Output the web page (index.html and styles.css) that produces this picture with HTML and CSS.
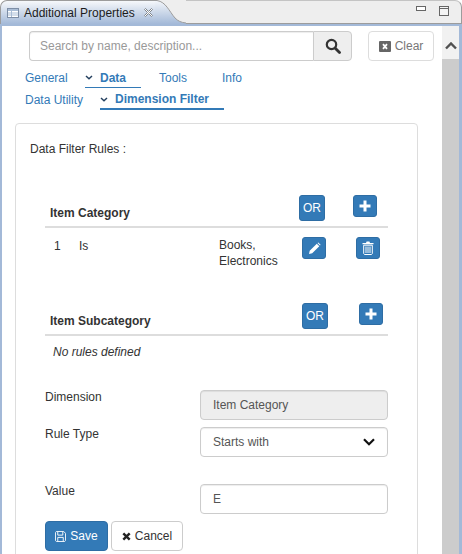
FILE: index.html
```html
<!DOCTYPE html>
<html lang="en">
<head>
<meta charset="UTF-8">
<meta name="viewport" content="width=device-width, initial-scale=1.0">
<title>Additional Properties</title>
<link rel="stylesheet" href="styles.css">
</head>
<body>

<div class="window">
  <div class="tabbar">
    <div class="tab">
      <svg class="tab-icon" width="12" height="10" viewBox="0 0 12 10">
        <rect x="0.500" y="0.500" width="11" height="9" fill="#fff" stroke="#7d8ea6"/>
        <rect x="1" y="1" width="10" height="2" fill="#a9bdd6"/>
        <path d="M1 5h10M1 7h10M4.500 3v6" stroke="#a9bdd6" fill="none"/>
      </svg>
      <span class="tab-title">Additional Properties</span>
      <svg class="tab-close" width="11" height="11" viewBox="0 0 11 11">
        <path d="M1.500 2.500l1-1 3 3 3-3 1 1-3 3 3 3-1 1-3-3-3 3-1-1 3-3z" fill="#fff" stroke="#7f858c"/>
      </svg>
    </div>
    <svg class="tab-curve" width="31" height="24" viewBox="0 0 31 24">
      <defs>
        <linearGradient id="tabFill" x1="0" y1="0" x2="0" y2="1">
          <stop offset="0" stop-color="#f6f8fb"/>
          <stop offset="1" stop-color="#a3b9d8"/>
        </linearGradient>
      </defs>
      <path d="M0 0H2C11 2 14 11 20 18C23 21 26 22.500 31 23V24H0z" fill="url(#tabFill)"/>
      <path d="M0 0.500H2C11 2 14 11 20 18C23 21 26 22.500 31 23" fill="none" stroke="#9c9c9c"/>
    </svg>
    <div class="tab-rest">
      <svg width="10" height="5" viewBox="0 0 10 5"><rect x="0.500" y="0.500" width="9" height="4" fill="#fff" stroke="#666"/></svg>
      <svg width="10" height="10" viewBox="0 0 10 10"><rect x="0.500" y="0.500" width="9" height="9" fill="#f4f4f4" stroke="#666"/><path d="M0 2.500h10" stroke="#666"/></svg>
    </div>
  </div>

  <div class="view">
    <div class="content">
      <div class="search-row">
        <div class="search">
          <input class="search-input" type="text" placeholder="Search by name, description...">
          <button class="search-btn">
            <svg width="16" height="16" viewBox="0 0 16 16">
              <circle cx="6.500" cy="6.500" r="4.700" fill="none" stroke="#333" stroke-width="2.200"/>
              <path d="M10 10l4.500 4.500" stroke="#333" stroke-width="2.800" stroke-linecap="round"/>
            </svg>
          </button>
        </div>
        <button class="clear-btn">
          <svg width="12" height="11" viewBox="0 0 12 11">
            <rect width="12" height="11" rx="1" fill="#666"/>
            <path d="M4 3.200l4 4.600M8 3.200l-4 4.600" stroke="#fff" stroke-width="1.800"/>
          </svg>
          Clear
        </button>
      </div>

      <div class="nav nav-top">
        <a class="nav-link nav-general">General</a>
        <a class="nav-link nav-open nav-data">
          <svg class="chev" width="8" height="5" viewBox="0 0 8 5"><path d="M1 1l3 2.700L7 1" fill="none" stroke="#24405f" stroke-width="1.500"/></svg>
          Data
        </a>
        <a class="nav-link nav-tools">Tools</a>
        <a class="nav-link">Info</a>
      </div>
      <div class="nav nav-sub">
        <a class="nav-link nav-utility">Data Utility</a>
        <a class="nav-link nav-open nav-filter">
          <svg class="chev" width="8" height="5" viewBox="0 0 8 5"><path d="M1 1l3 2.700L7 1" fill="none" stroke="#24405f" stroke-width="1.500"/></svg>
          Dimension Filter
        </a>
      </div>

      <div class="card">
        <div class="card-title">Data Filter Rules :</div>

        <div class="rules rules-category">
          <div class="rules-head">
            <span class="rules-name">Item Category</span>
            <button class="btn-blue btn-or">OR</button>
            <button class="btn-blue btn-icon btn-add">
              <svg width="12" height="12" viewBox="0 0 12 12"><path d="M4.500 0.500h3v4h4v3h-4v4h-3v-4h-4v-3h4z" fill="#fff"/></svg>
            </button>
          </div>
          <div class="rule-row">
            <span class="rule-num">1</span>
            <span class="rule-op">Is</span>
            <span class="rule-val">Books,<br>Electronics</span>
            <button class="btn-blue btn-icon btn-edit">
              <svg width="13" height="13" viewBox="0 0 13 13"><path d="M1 12l.7-3.200L8.800 1.700l2.500 2.500-7.100 7.100zM9.500 1l.8-.6 2.300 2.300-.6.800z" fill="#fff"/></svg>
            </button>
            <button class="btn-blue btn-icon btn-del">
              <svg width="12" height="14" viewBox="0 0 12 14">
                <path d="M4 2l.6-1.500h2.800L8 2h3.500v1.200H.5V2z" fill="#fff"/>
                <path d="M1.700 4.200h8.600v8.300l-.8 1h-7l-.8-1z" fill="none" stroke="#fff"/>
                <path d="M4 5.500v6.500M6 5.500v6.500M8 5.500v6.500" stroke="#fff"/>
              </svg>
            </button>
          </div>
        </div>

        <div class="rules rules-subcategory">
          <div class="rules-head">
            <span class="rules-name">Item Subcategory</span>
            <button class="btn-blue btn-or">OR</button>
            <button class="btn-blue btn-icon btn-add">
              <svg width="12" height="12" viewBox="0 0 12 12"><path d="M4.500 0.500h3v4h4v3h-4v4h-3v-4h-4v-3h4z" fill="#fff"/></svg>
            </button>
          </div>
          <div class="rules-empty">No rules defined</div>
        </div>

        <form class="rule-form">
          <label class="form-label" for="dimension">Dimension</label>
          <input class="form-control" id="dimension" type="text" value="Item Category" disabled>

          <label class="form-label" for="ruleType">Rule Type</label>
          <div class="form-control select-box" id="ruleType">
            <span>Starts with</span>
            <svg width="12" height="8" viewBox="0 0 12 8"><path d="M1 1.200l5 5 5-5" fill="none" stroke="#111" stroke-width="2.200"/></svg>
          </div>

          <label class="form-label label-value" for="value">Value</label>
          <input class="form-control control-value" id="value" type="text" value="E">
        </form>

        <div class="actions">
          <button class="save-btn">
            <svg width="11" height="11" viewBox="0 0 12 12">
              <path d="M.5 1.500l1-1h8l2 2v8l-1 1h-9l-1-1z" fill="none" stroke="#fff"/>
              <path d="M3 1v3.500h5.500V1M3 11V7h6v4" fill="none" stroke="#fff"/>
            </svg>
            Save
          </button>
          <button class="cancel-btn">
            <svg width="9" height="9" viewBox="0 0 9 9"><path d="M1.300 1.300l6.400 6.400M7.700 1.300L1.300 7.700" stroke="#222" stroke-width="2.400"/></svg>
            Cancel
          </button>
        </div>
      </div>
    </div>

    <div class="scrollbar">
      <div class="scroll-up">
        <svg width="12" height="8" viewBox="0 0 12 8"><path d="M1 6.500l5-5 5 5" fill="none" stroke="#505050" stroke-width="2.400"/></svg>
      </div>
    </div>
  </div>
</div>

</body>
</html>
```

FILE: styles.css
```css
* {
  box-sizing: border-box;
}

html, body {
  margin: 0;
  padding: 0;
  height: 100%;
  overflow: hidden;
}

body {
  font-family: "Liberation Sans", Arial, sans-serif;
  font-size: 12px;
  color: #333;
  background-color: #fff;
}

button, input {
  font-family: inherit;
  font-size: 12px;
}

.window {
  width: 462px;
  height: 554px;
  display: flex;
  flex-direction: column;
}

/* eclipse style view tab */
.tabbar {
  height: 24px;
  display: flex;
  flex-shrink: 0;
}

.tab {
  width: 155px;
  height: 24px;
  display: flex;
  align-items: center;
  padding-left: 6px;
  border-top: 1px solid #9c9c9c;
  border-left: 1px solid #9c9c9c;
  border-top-left-radius: 7px;
  background: linear-gradient(#f6f8fb, #a3b9d8);
}

.tab-icon {
  flex-shrink: 0;
}

.tab-title {
  margin-left: 5px;
  color: #1c1c1c;
  white-space: nowrap;
}

.tab-close {
  margin-left: 8px;
  flex-shrink: 0;
}

.tab-curve {
  flex-shrink: 0;
  background-color: #eee;
}

.tab-rest {
  flex: 1;
  display: flex;
  justify-content: flex-end;
  align-items: flex-start;
  gap: 13px;
  padding: 5px 12px 0 0;
  background-color: #eee;
  border-top: 1px solid #c4c4c4;
  border-right: 1px solid #9c9c9c;
  border-bottom: 1px solid #9c9c9c;
  border-top-right-radius: 7px;
}

.view {
  flex: 1;
  display: flex;
  min-height: 0;
  border-style: solid;
  border-color: #a3b9d8;
  border-width: 2px 3px 0 2px;
}

.content {
  flex: 1;
  min-width: 0;
  overflow: hidden;
  background-color: #fff;
}

.scrollbar {
  width: 17px;
  background-color: #ccc;
}

.scroll-up {
  height: 33px;
  display: flex;
  justify-content: center;
  padding-top: 16px;
  background-color: #f1f1f1;
}

/* search */
.search-row {
  display: flex;
  gap: 16px;
  margin: 5px 0 0 27px;
}

.search {
  width: 323px;
  height: 30px;
  display: flex;
}

.search-input {
  flex: 1;
  min-width: 0;
  padding: 0 10px;
  border: 1px solid #ccc;
  border-right: 0;
  border-radius: 4px 0 0 4px;
  box-shadow: inset 0 1px 1px rgba(0, 0, 0, 0.075);
  color: #555;
}

.search-input::placeholder {
  color: #999;
}

.search-btn {
  width: 39px;
  display: flex;
  align-items: center;
  justify-content: center;
  padding: 0;
  border: 1px solid #ccc;
  border-radius: 0 4px 4px 0;
  background-color: #eee;
}

.clear-btn {
  width: 66px;
  height: 30px;
  display: flex;
  align-items: center;
  justify-content: center;
  gap: 4px;
  padding: 0;
  border: 1px solid #ddd;
  border-radius: 4px;
  background-color: #fff;
  color: #777;
}

/* tabs */
.nav {
  display: flex;
  height: 22px;
}

.nav-top {
  margin-top: 7px;
  padding-left: 23px;
}

.nav-sub {
  padding-left: 23px;
}

.nav-link {
  display: flex;
  align-items: center;
  height: 20px;
  color: #337ab7;
  white-space: nowrap;
}

.nav-general {
  width: 60px;
}

.nav-utility {
  width: 75px;
}

.nav-data {
  width: 56px;
  margin-right: 18px;
  border-bottom: 1px solid #337ab7;
}

.nav-tools {
  width: 63px;
}

.nav-open {
  font-weight: bold;
}

.nav-filter {
  width: 124px;
  border-bottom: 2px solid #337ab7;
}

.chev {
  margin-right: 7px;
  flex-shrink: 0;
}

/* card */
.card {
  width: 403px;
  height: 460px;
  margin: 11px 0 0 13px;
  padding: 18px 29px 0 29px;
  border: 1px solid #ddd;
  border-radius: 4px;
}

.card-title {
  margin-left: -15px;
  color: #333;
}

.rules-category {
  margin-top: 39px;
}

.rules-subcategory {
  margin-top: 20px;
}

.rules-head {
  height: 33px;
  display: flex;
  align-items: flex-start;
  border-bottom: 2px solid #ddd;
}

.rules-name {
  width: 254px;
  flex-shrink: 0;
  padding: 11px 0 0 5px;
  font-weight: bold;
}

.rules-subcategory .rules-name {
  width: 257px;
}

.btn-blue {
  display: flex;
  align-items: center;
  justify-content: center;
  flex-shrink: 0;
  padding: 0;
  border: 1px solid #2e6da4;
  border-radius: 3px;
  background-color: #337ab7;
  color: #fff;
}

.btn-or {
  width: 26px;
  height: 26px;
}

.btn-icon {
  width: 24px;
  height: 22px;
}

.btn-add {
  margin-left: 28px;
}

.rules-subcategory .btn-add {
  margin-left: 31px;
}

.rule-row {
  height: 55px;
  display: flex;
  align-items: flex-start;
  padding-top: 9px;
}

.rule-num {
  width: 34px;
  padding-left: 9px;
  padding-top: 2px;
}

.rule-op {
  width: 140px;
  padding-top: 2px;
}

.rule-val {
  width: 83px;
  line-height: 16px;
}

.btn-del {
  margin-left: 30px;
}

.rules-empty {
  margin-top: 9px;
  padding-left: 8px;
  font-style: italic;
}

/* form */
.rule-form {
  display: grid;
  grid-template-columns: 155px 188px;
  row-gap: 7px;
  margin-top: 31px;
}

.form-label {
  padding-top: 0;
}

.form-control {
  height: 30px;
  width: 188px;
  padding: 0 12px;
  border: 1px solid #ccc;
  border-radius: 4px;
  box-shadow: inset 0 1px 1px rgba(0, 0, 0, 0.075);
  background-color: #fff;
  color: #555;
}

.form-control:disabled {
  background-color: #eee;
}

.select-box {
  display: flex;
  align-items: center;
  justify-content: space-between;
}

.label-value,
.control-value {
  margin-top: 20px;
}

.actions {
  display: flex;
  gap: 3px;
  margin-top: 7px;
}

.save-btn,
.cancel-btn {
  height: 30px;
  display: flex;
  align-items: center;
  justify-content: center;
  gap: 4px;
  padding: 0;
  border-radius: 4px;
}

.save-btn {
  width: 63px;
  border: 1px solid #2e6da4;
  background-color: #337ab7;
  color: #fff;
}

.cancel-btn {
  width: 72px;
  border: 1px solid #ccc;
  background-color: #fff;
  color: #333;
}
```
